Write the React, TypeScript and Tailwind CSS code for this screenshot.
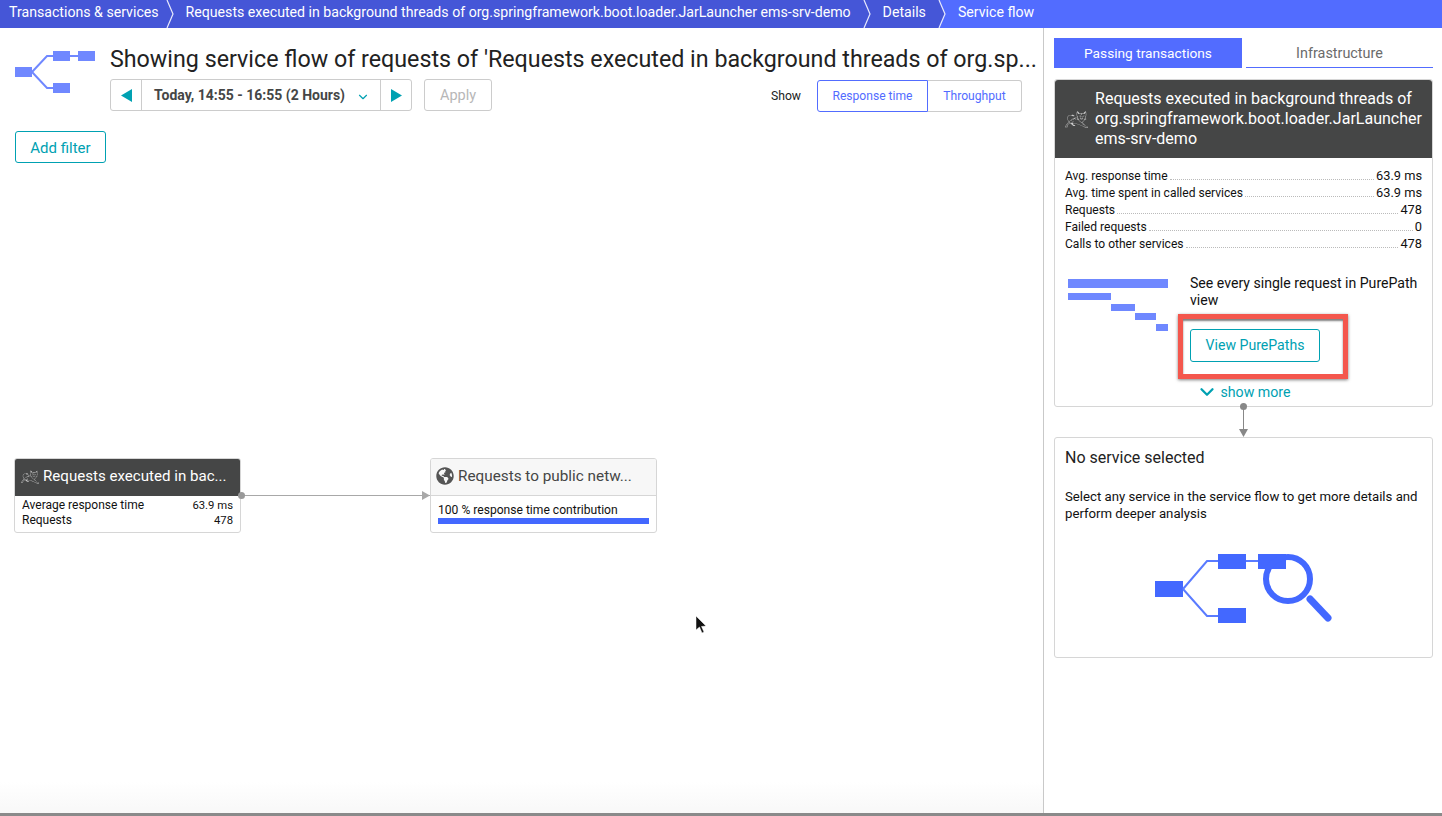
import { ChevronDown } from 'lucide-react';
import { FaGlobeAmericas } from 'react-icons/fa';
import { SiApachetomcat } from 'react-icons/si';

const crumbs = [
  { label: 'Transactions & services', cls: 'pl-[9px] pr-[7px]' },
  { label: 'Requests executed in background threads of org.springframework.boot.loader.JarLauncher ems-srv-demo', cls: 'pl-[20px] pr-[12px]' },
  { label: 'Details', cls: 'pl-[20px] pr-[12px]' },
];

const stats = [
  { label: 'Avg. response time', value: '63.9 ms' },
  { label: 'Avg. time spent in called services', value: '63.9 ms' },
  { label: 'Requests', value: '478' },
  { label: 'Failed requests', value: '0' },
  { label: 'Calls to other services', value: '478' },
];

function Crumb({ label, cls }: { label: string; cls: string }) {
  return (
    <>
      <div className={`h-full flex items-center pb-[3px] bg-[#4556d7] whitespace-nowrap ${cls}`}>{label}</div>
      <svg width="8" height="28" viewBox="0 0 8 28" className="shrink-0 -mr-[8px] relative">
        <polygon points="0,0 1,0 7,14 1,28 0,28" fill="#4556d7" />
        <polyline points="1,0 7,14 1,28" fill="none" stroke="#e8eafc" strokeWidth="1.2" />
      </svg>
    </>
  );
}

function FlowIcon() {
  return (
    <svg width="82" height="44" viewBox="0 0 82 44" className="shrink-0">
      <g fill="#7088ff">
        <rect x="0" y="16" width="17" height="10" />
        <rect x="38" y="0" width="17" height="10" />
        <rect x="63" y="0" width="17" height="10" />
        <rect x="38" y="32" width="17" height="10" />
      </g>
      <polyline points="17,21 32,5 38,5" fill="none" stroke="#7088ff" strokeWidth="2" />
      <polyline points="17,21 32,37 38,37" fill="none" stroke="#7088ff" strokeWidth="2" />
      <line x1="55" y1="5" x2="63" y2="5" stroke="#7088ff" strokeWidth="2" />
    </svg>
  );
}

function SearchFlowIcon() {
  return (
    <svg width="180" height="72" viewBox="1154 551 180 72" className="block">
      <g fill="#4368ff">
        <rect x="1155" y="580" width="28" height="16" />
        <rect x="1218" y="553" width="28" height="15" />
        <rect x="1258" y="553" width="28" height="15" />
        <rect x="1218" y="607" width="28" height="15" />
      </g>
      <polyline points="1183,588 1207,560 1218,560" fill="none" stroke="#5a7bff" strokeWidth="2" />
      <polyline points="1183,588 1207,615 1218,615" fill="none" stroke="#5a7bff" strokeWidth="2" />
      <line x1="1246" y1="560" x2="1258" y2="560" stroke="#5a7bff" strokeWidth="2" />
      <circle cx="1288" cy="578" r="22" fill="none" stroke="#4368ff" strokeWidth="6" />
      <line x1="1310" y1="598" x2="1328" y2="617" stroke="#4368ff" strokeWidth="7" strokeLinecap="round" />
    </svg>
  );
}

function Triangle({ dir }: { dir: 'left' | 'right' }) {
  return (
    <svg width="12" height="13" viewBox="0 0 12 13" className={dir === 'left' ? 'ml-[2px]' : ''}>
      <polygon points={dir === 'left' ? '11,0 11,13 0,6.5' : '1,0 1,13 12,6.5'} fill="#00a1b2" />
    </svg>
  );
}

function PurePathBars() {
  return (
    <div className="w-[100px] shrink-0 pt-[4px]">
      <div className="h-[9px] w-[100px] bg-[#6f88ff]" />
      <div className="h-[7px] w-[43px] bg-[#6f88ff] mt-[5px]" />
      <div className="h-[7px] w-[24px] ml-[43px] bg-[#6f88ff] mt-[4px]" />
      <div className="h-[7px] w-[21px] ml-[67px] bg-[#6f88ff] mt-[2px]" />
      <div className="h-[7px] w-[12px] ml-[88px] bg-[#6f88ff] mt-[4px]" />
    </div>
  );
}

export default function App() {
  return (
    <div className="relative w-[1442px] h-[816px] overflow-hidden bg-white text-[#111] font-['Roboto','Open_Sans',sans-serif] text-[13.2px]">
      {/* breadcrumb */}
      <div className="h-[28px] bg-[#526cff] text-white text-[14.15px] flex items-center">
        {crumbs.map((c) => (
          <Crumb key={c.label} label={c.label} cls={c.cls} />
        ))}
        <div className="pl-[20px] pb-[3px] whitespace-nowrap">Service flow</div>
      </div>

      <div className="flex h-[785px]">
        {/* left side */}
        <div className="relative w-[1044px] shrink-0 border-r border-[#c9c9c9] bg-gradient-to-b from-white from-[96%] to-[#f8f8f8]">
          <div className="flex pl-[15px] pt-[23px] pr-[5px]">
            <FlowIcon />
            <div className="ml-[13px] min-w-0 flex-1 -mt-[6px]">
              <h1 className="text-[23.25px] leading-[28px] font-normal text-[#222] whitespace-nowrap">
                Showing service flow of requests of 'Requests executed in background threads of org.sp...
              </h1>
              <div className="flex items-start mt-[6px]">
                <div className="flex h-[32px] w-[302px] border border-[#ccc] rounded-[3px]">
                  <div className="w-[31px] flex items-center justify-center border-r border-[#ccc]">
                    <Triangle dir="left" />
                  </div>
                  <div className="w-[238px] flex items-center pl-[12px] font-bold text-[14px] text-[#454646] whitespace-nowrap">
                    Today, 14:55 - 16:55 (2 Hours)
                    <ChevronDown className="w-[14px] h-[14px] text-[#00a1b2] ml-auto mr-[10px] mt-[3px]" strokeWidth={2} />
                  </div>
                  <div className="flex-1 flex items-center justify-center border-l border-[#ccc]">
                    <Triangle dir="right" />
                  </div>
                </div>
                <button className="ml-[12px] w-[68px] h-[32px] pt-[2px] border border-[#ccc] rounded-[3px] text-[14.5px] text-[#b7b7b7]">Apply</button>
                <span className="ml-auto mt-[8px] text-[12.2px] leading-[18px] text-[#222]">Show</span>
                <div className="flex ml-[16px] mr-[16px] h-[32px] mt-[1px] text-[12.1px]">
                  <button className="w-[111px] border border-[#526cff] rounded-l-[3px] text-[#526cff]">Response time</button>
                  <button className="w-[94px] border border-l-0 border-[#ccc] rounded-r-[3px] text-[#526cff]">Throughput</button>
                </div>
              </div>
            </div>
          </div>
          <button className="block ml-[15px] mt-[19px] w-[91px] h-[32px] pt-[2px] border border-[#00a1b2] rounded-[3px] text-[15px] text-[#00a1b2]">Add filter</button>

          {/* flow canvas */}
          <div className="absolute left-[14px] top-[430px] w-[227px] h-[75px] rounded-[3px] border border-[#d6d6d6] overflow-hidden">
            <div className="h-[37px] bg-[#454646] flex items-center pl-[6px] pb-[2px] gap-[4px] text-white text-[15.1px] whitespace-nowrap">
              <SiApachetomcat className="w-[18px] h-[18px] text-[#c8c8c8]" />
              Requests executed in bac...
            </div>
            <div className="px-[7px] pt-[2px] text-[12px] leading-[15px]">
              <div className="flex justify-between items-baseline"><span>Average response time</span><span className="text-[11.3px]">63.9 ms</span></div>
              <div className="flex justify-between items-baseline"><span>Requests</span><span className="text-[11.3px]">478</span></div>
            </div>
          </div>
          <div className="absolute left-[241px] top-[467px] w-[189px] h-px bg-[#a8a8a8]" />
          <div className="absolute left-[238px] top-[464px] w-[7px] h-[7px] rounded-full bg-[#999]" />
          <svg width="8" height="9" viewBox="0 0 8 9" className="absolute left-[422px] top-[463px]">
            <polygon points="0,0 8,4.5 0,9" fill="#a8a8a8" />
          </svg>
          <div className="absolute left-[430px] top-[430px] w-[227px] h-[75px] rounded-[3px] border border-[#d6d6d6] overflow-hidden">
            <div className="h-[37px] bg-[#f7f7f7] border-b border-[#d6d6d6] flex items-center pl-[5px] pb-[2px] gap-[4px] text-[#454646] text-[15.3px] whitespace-nowrap">
              <FaGlobeAmericas className="w-[18px] h-[18px] text-[#555]" />
              Requests to public netw...
            </div>
            <div className="px-[7px] pt-[7px] text-[12.1px] leading-[15px]">
              100 % response time contribution
              <div className="h-[6px] bg-[#4368ff]" />
            </div>
          </div>

          {/* mouse pointer */}
          <svg width="12" height="19" viewBox="0 0 12 19" className="absolute left-[695px] top-[588px]">
            <polygon points="1,0 1,14 4.5,11 7,17 9,16 6.5,10.5 11,10" fill="#111" stroke="#fff" strokeWidth="0.5" />
          </svg>
        </div>

        {/* right side */}
        <div className="relative w-[398px] pl-[10px] pr-[9px] pt-[10px]">
          <div className="flex h-[30px]">
            <div className="w-[188px] bg-[#526cff] text-white text-[13.7px] flex items-center justify-center">Passing transactions</div>
            <div className="ml-[4px] w-[187px] pt-[2px] border-b border-[#526cff] text-[#6b6b6b] text-[14.4px] flex items-center justify-center">Infrastructure</div>
          </div>

          <div className="relative mt-[11px] h-[328px] border border-[#d6d6d6] rounded-[3px]">
            <div className="h-[78px] bg-[#454646] text-white text-[16.05px] leading-[20px] flex items-center pl-[10px] rounded-t-[3px]">
              <SiApachetomcat className="w-[23px] h-[23px] text-[#c8c8c8] shrink-0" />
              <div className="ml-[7px]">
                Requests executed in background threads of
                <br />
                org.springframework.boot.loader.JarLauncher
                <br />
                ems-srv-demo
              </div>
            </div>
            <div className="px-[10px] pt-[9px] pb-[1px]">
              {stats.map((s) => (
                <div key={s.label} className="flex items-baseline h-[17px] leading-[17px]">
                  <span className="text-[12.05px]">{s.label}</span>
                  <span className="flex-1 mx-[2px] border-b border-dotted border-[#bbb]" />
                  <span className="text-[12.8px]">{s.value}</span>
                </div>
              ))}
            </div>
            <div className="flex pl-[13px] pt-[22px]">
              <PurePathBars />
              <div className="ml-[22px]">
                <p className="leading-[17px] text-[14.1px] w-[235px]">See every single request in PurePath view</p>
                <button className="block mt-[20px] w-[130px] h-[33px] border border-[#00a1b2] rounded-[3px] text-[14.1px] text-[#00a1b2]">View PurePaths</button>
              </div>
            </div>
            <div className="absolute left-[123px] top-[234px] w-[170px] h-[65px] border-[5px] border-[#f4574d] shadow-[0_1px_3px_rgba(0,0,0,0.5),inset_0_2px_2px_rgba(0,0,0,0.5)]" />
            <div className="absolute left-0 right-0 bottom-[3px] flex items-center justify-center text-[14.2px] text-[#00a1b2] leading-[20px]">
              <ChevronDown className="w-[22px] h-[22px] mr-[2px]" strokeWidth={2.5} />
              show more
            </div>
            <div className="absolute left-[185px] -bottom-[4px] w-[7px] h-[7px] rounded-full bg-[#888]" />
          </div>

          <div className="flex flex-col items-center h-[30px]">
            <div className="w-px flex-1 bg-[#888]" />
            <svg width="9" height="8" viewBox="0 0 9 8" className="block">
              <polygon points="0,0 9,0 4.5,8" fill="#888" />
            </svg>
          </div>

          <div className="h-[221px] border border-[#d6d6d6] rounded-[3px] px-[10px] pt-[9px]">
            <div className="text-[16px] leading-[22px] text-[#222]">No service selected</div>
            <p className="mt-[19px] leading-[17px]">Select any service in the service flow to get more details and perform deeper analysis</p>
            <div className="mt-[30px] ml-[89px]">
              <SearchFlowIcon />
            </div>
          </div>
        </div>
      </div>

      <div className="h-[3px] bg-[#8a8a8a]" />
    </div>
  );
}
